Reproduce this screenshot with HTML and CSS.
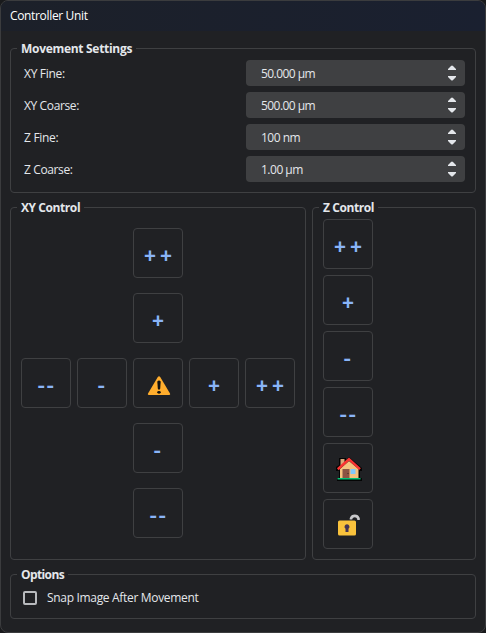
FILE: index.html
```html
<!DOCTYPE html>
<html lang="en">
<head>
<meta charset="utf-8">
<title>Controller Unit</title>
<link rel="stylesheet" href="styles.css">
</head>
<body>
<svg class="defs" width="0" height="0">
  <symbol id="arrows" viewBox="0 0 8 16"><path d="M0 5V4L3 1Q4 0 5 1L8 4V5ZM0 11V12L3 15Q4 16 5 15L8 12V11Z" fill="#e4e7eb"/></symbol>
</svg>
<main class="window">
  <header class="titlebar"><span class="t-title">Controller Unit</span></header>
  <section class="group settings">
    <h2 class="legend t-movement">Movement Settings</h2>
    <div class="row"><label class="t-xyf">XY Fine:</label><div class="spin"><span class="t-v1">50.000 µm</span><svg class="arrows"><use href="#arrows"/></svg></div></div>
    <div class="row"><label class="t-xyc">XY Coarse:</label><div class="spin"><span class="t-v2">500.00 µm</span><svg class="arrows"><use href="#arrows"/></svg></div></div>
    <div class="row"><label class="t-zf">Z Fine:</label><div class="spin"><span class="t-v3">100 nm</span><svg class="arrows"><use href="#arrows"/></svg></div></div>
    <div class="row"><label class="t-zc">Z Coarse:</label><div class="spin"><span class="t-v4">1.00 µm</span><svg class="arrows"><use href="#arrows"/></svg></div></div>
  </section>
  <div class="controls">
    <section class="group xy">
      <h2 class="legend t-xy">XY Control</h2>
      <div class="pad">
        <button class="btn mid plus">++</button>
        <button class="btn mid plus">+</button>
        <button class="btn first minus">--</button>
        <button class="btn minus single">-</button>
        <button class="btn" aria-label="Stop"><svg class="warn" viewBox="0 0 24 20"><path d="M10.8 1Q12 -.3 13.2 1L23 17.5Q23.7 19 22 19H2Q.3 19 1 17.5Z" fill="#ffad2d"/><path d="M10.3 5.5Q12 3.5 13.7 5.5L13.2 12.8Q12 14.5 10.8 12.8Z" fill="#111"/><ellipse cx="12" cy="16.3" rx="1.8" ry="1.4" fill="#111"/></svg></button>
        <button class="btn plus">+</button>
        <button class="btn plus">++</button>
        <button class="btn mid minus single">-</button>
        <button class="btn mid minus">--</button>
      </div>
    </section>
    <section class="group z">
      <h2 class="legend t-z">Z Control</h2>
      <button class="btn plus">++</button>
      <button class="btn plus">+</button>
      <button class="btn minus single">-</button>
      <button class="btn minus">--</button>
      <button class="btn" aria-label="Home"><svg class="home" viewBox="0 0 26 24"><path d="M3 1H10V3L13 0L26 11V14H24V21H26V24H1V21H3V14H0V10L3 8Z" fill="#050505"/><path d="M4.5 2H8.5V8H4.5Z" fill="#dca779"/><path d="M4 12L13 4L22.5 12V21H4Z" fill="#f5c27f"/><path d="M1.8 12.2L13 2.2L24 12.2" fill="none" stroke="#fa3332" stroke-width="2.5"/><path d="M6.5 12H13.5V21H6.5Z" fill="#8b5443"/><path d="M14.5 12H19.5V17H14.5Z" fill="#82c8fa"/><path d="M11.5 16H12.5V17H11.5Z" fill="#392621"/><path d="M1.5 21.2H24.5V22.4H1.5Z" fill="#00ef91"/></svg></button>
      <button class="btn" aria-label="Unlock"><svg class="lock" viewBox="0 0 22 23"><path d="M13 6.5V5.5A4 4 0 0 1 20.5 5.5V7" fill="none" stroke="#c9c9cc" stroke-width="2.6"/><rect x="0" y="7.5" width="18" height="15" rx="1.6" fill="#f9c23c"/><path d="M9 11.2A2.5 2.5 0 0 1 10.5 15.7V19H7.5V15.7A2.5 2.5 0 0 1 9 11.2Z" fill="#443454"/></svg></button>
    </section>
  </div>
  <section class="group options">
    <h2 class="legend t-opt">Options</h2>
    <label class="check"><span class="box"></span><span class="t-snap">Snap Image After Movement</span></label>
  </section>
</main>
</body>
</html>
```
FILE: styles.css
```css
* { box-sizing: border-box; }
body {
  margin: 0;
  background: #191a1c;
  color: #e4e7eb;
  font: 12px/16px "Open Sans", "Noto Sans", sans-serif;
}
.defs { position: absolute; }
.window {
  width: 486px;
  height: 633px;
  border: 1px solid #3b3c3e;
  border-radius: 8px;
  background: #202124;
  overflow: hidden;
}
.titlebar {
  height: 30px;
  padding: 7px 9px;
  background: linear-gradient(90deg, #1c2029, #1a2030);
  color: #fff;
}
span, label { white-space: nowrap; }
.group {
  position: relative;
  border: 1px solid #3f4042;
  border-radius: 4px;
}
.legend {
  position: absolute;
  left: 6px;
  top: -8px;
  margin: 0;
  padding: 0 4px;
  background: #202124;
  font-size: 12px;
  line-height: 16px;
  font-weight: 700;
  white-space: nowrap;
}
.settings {
  display: flex;
  flex-direction: column;
  gap: 6px;
  height: 145px;
  margin: 17px 9px 0;
  padding: 11px 10px 0 13px;
}
.row { display: flex; justify-content: space-between; align-items: center; height: 26px; }
.row label, .spin span { padding-top: 2px; }
.spin {
  display: flex;
  align-items: center;
  justify-content: space-between;
  width: 219px;
  height: 26px;
  padding: 0 9px 0 15px;
  border-radius: 4px;
  background: #3f4042;
}
.arrows { width: 8px; height: 16px; }
.controls { display: flex; gap: 6px; margin: 14px 9px 0; }
.xy { width: 296px; height: 353px; padding: 20px 10px 0; }
.pad { display: grid; grid-template-columns: repeat(5, 50px); gap: 15px 6px; }
.mid { grid-column: 3; }
.first { grid-column: 1; }
.z { display: flex; flex-direction: column; gap: 6px; width: 164px; padding: 11px 10px 0; }
.btn {
  display: flex;
  align-items: center;
  justify-content: center;
  width: 50px;
  height: 50px;
  padding: 0;
  border: 1px solid #3f4042;
  border-radius: 4px;
  background: transparent;
  color: #8ab4f7;
  font: 600 20px/24px "Open Sans", sans-serif;
}
.plus { padding: 4px 0 0 4px; font-weight: 700; font-size: 21px; letter-spacing: 4px; }
.minus { padding: 2px 0 0 1px; font-size: 23px; letter-spacing: 1.6px; }
.minus.single { padding-left: 0; }
.warn { width: 24px; height: 20px; margin: 5px 0 0 1px; }
.home { width: 26px; height: 24px; margin: 2px 0 0 1px; }
.lock { width: 22px; height: 23px; margin: 1px 0 0 1px; }
.options { height: 45px; margin: 14px 9px 0; padding: 15px 12px; }
.check { display: flex; align-items: center; gap: 10px; }
.box { width: 14px; height: 14px; border: 2px solid #b8babd; border-radius: 2px; }

/* Tight tracking for the compact labels */
.t-title { letter-spacing: -.34px; }
.t-movement { letter-spacing: -.3px; }
.t-xyf, .t-zf { letter-spacing: -.3px; }
.t-xyc, .t-zc { letter-spacing: -.38px; }
.t-v1, .t-v2 { letter-spacing: -.55px; }
.t-v3, .t-v4 { letter-spacing: -.5px; }
.t-xy, .t-z { letter-spacing: -.42px; }
.t-opt { letter-spacing: -.6px; }
.t-snap { letter-spacing: -.32px; }
```
